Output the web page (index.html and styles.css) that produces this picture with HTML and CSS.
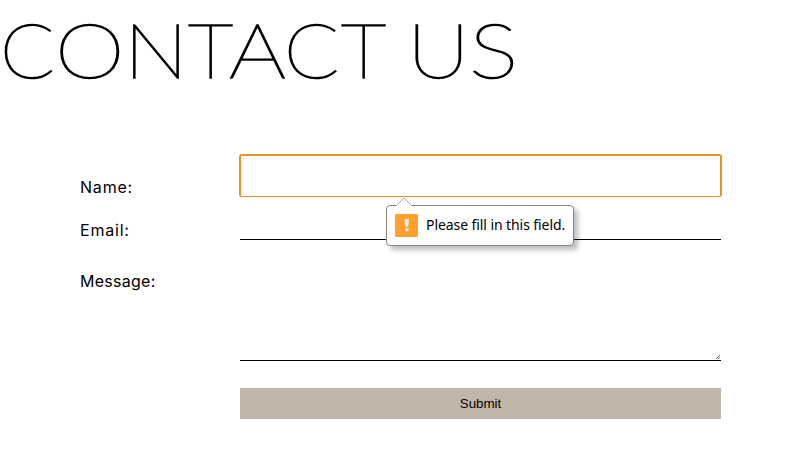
FILE: index.html
```
<!DOCTYPE html>
<html lang="en">
<head>
<meta charset="utf-8">
<title>Contact Us</title>
<link rel="stylesheet" href="styles.css">
</head>
<body>
<h1 class="title"><span class="c1">C</span><span class="o">O</span><span class="n">N</span><span class="t1">T</span><span class="a">A</span><span class="c2">C</span><span class="t2">T </span><span class="u">U</span><span class="s">S</span></h1>
<form class="contact">
  <label class="label" for="name">Name:</label>
  <div class="field">
    <input class="input input-focused" id="name" type="text">
    <div class="tooltip" role="alert">
      <svg class="tooltip-arrow" width="18" height="10" viewBox="0 0 18 10"><path d="M1 9 9 1l8 8v1H1z" fill="#fff"/><path d="M1 9 9 1l8 8" fill="none" stroke="#aaa"/></svg>
      <svg class="tooltip-icon" width="23" height="23" viewBox="0 0 23 23"><rect width="23" height="23" rx="1.5" fill="#ff9f2e"/><path d="M9.7 5h4l-.4 7.5h-3.2z" fill="#fff"/><rect x="10" y="14.2" width="3.4" height="3" rx="1" fill="#fff"/></svg>
      <span class="tooltip-text">Please fill in this field.</span>
    </div>
  </div>
  <label class="label" for="email">Email:</label>
  <input class="input" id="email" type="text">
  <label class="label label-message" for="message">Message:</label>
  <div class="field">
    <textarea class="input message" id="message"></textarea>
    <svg class="grip" width="4" height="4" viewBox="0 0 4 4" shape-rendering="crispEdges"><path d="M3 0h1v1H3zM2 1h1v1H2zM0 3h1v1H0zM1 2h1v1H1zM3 2h1v1H3zM2 3h1v1H2z" fill="#777"/></svg>
  </div>
  <button class="submit" type="button">Submit</button>
</form>
</body>
</html>
```
FILE: styles.css
```
body { margin: 0; background: #fff; color: #000; overflow: hidden; }
.title {
  display: flex;
  margin: 0;
  height: 155px;
  font: 100 77px/96px Lato, sans-serif;
  white-space: nowrap;
  -webkit-text-stroke: 1.5px #000;
}
.title span { flex: none; transform-origin: 0 0; }
.title .c1 { width: 55px; transform: scaleX(1.04); }
.title .o { width: 69px; transform: scaleX(1.15); }
.title .n { width: 64px; transform: scaleX(1.11); }
.title .t1 { width: 41px; transform: scaleX(1.03); }
.title .a { width: 54.5px; transform: scaleX(1.16); }
.title .c2 { width: 57.5px; transform: scaleX(1.05); }
.title .t2 { width: 65.5px; transform: scaleX(1.03); }
.title .u { width: 62px; transform: scaleX(1.13); }
.title .s { width: 50px; transform: scaleX(1.21); }
.contact {
  display: grid;
  grid-template-columns: 160px 481px;
  grid-template-rows: 42px 43px 121px 58px;
  margin-left: 80px;
}
.label {
  align-self: end;
  font: 400 16px/20px Inter, sans-serif;
  letter-spacing: .8px;
}
.label-message { align-self: start; margin-top: 31px; letter-spacing: .27px; }
.field { position: relative; display: grid; }
.input {
  box-sizing: border-box;
  width: 100%;
  height: 100%;
  margin: 0;
  padding: 8px;
  border: 0;
  border-bottom: 1px solid #000;
  border-radius: 0;
  outline: 0;
  background: transparent;
  font: 16px "Liberation Sans", sans-serif;
}
.input-focused {
  width: 483px;
  height: 43px;
  margin: -1px 0 0 -1px;
  border: 2px solid #e9922b;
  border-bottom-width: 1px;
  border-radius: 3px;
}
.message { resize: none; }
.grip { position: absolute; right: 1px; bottom: 2px; }
.submit {
  grid-column: 2;
  height: 31px;
  margin-top: 27px;
  padding: 0;
  border: 0;
  background: #c0b7aa;
  color: #000;
  font: 13.33px "Liberation Sans", sans-serif;
}
.tooltip {
  position: absolute;
  top: 50px;
  left: 146px;
  z-index: 1;
  box-sizing: border-box;
  display: flex;
  align-items: center;
  gap: 8px;
  width: 188px;
  height: 41px;
  padding: 0 8px;
  border: 1px solid #858585;
  border-radius: 4px;
  background: #fff;
  box-shadow: 4px 4px 5px rgba(0, 0, 0, .25);
}
.tooltip-arrow { position: absolute; top: -9px; left: 8px; }
.tooltip-icon { flex: none; }
.tooltip-text {
  margin-top: -2px;
  font: 14px/20px "Noto Sans", sans-serif;
  letter-spacing: -.08px;
  white-space: nowrap;
}
```
